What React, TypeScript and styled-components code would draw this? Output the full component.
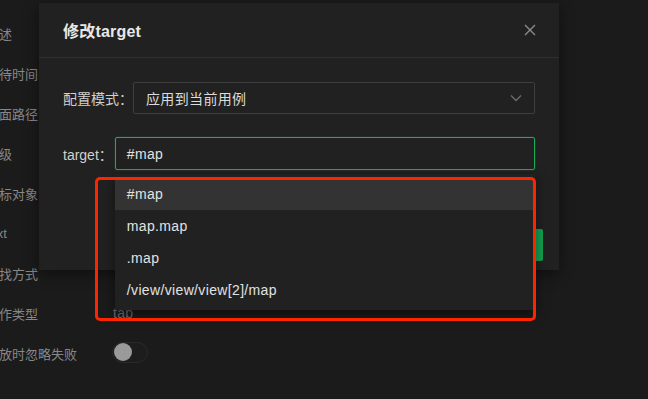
import React from "react";
import styled, { createGlobalStyle } from "styled-components";

const GlobalStyle = createGlobalStyle`
  html, body {
    margin: 0;
    padding: 0;
    background: #1b1b1b;
  }
  body {
    font-family: "Liberation Sans", "Noto Sans CJK SC", sans-serif;
    font-size: 14px;
    -webkit-font-smoothing: antialiased;
  }
`;

const Page = styled.div`
  position: relative;
  width: 648px;
  height: 399px;
  overflow: hidden;
  background: #1b1b1b;
`;

const BgForm = styled.div`
  display: flex;
  flex-direction: column;
  padding-top: 13px;
  margin-left: -14px;
`;

const BgRow = styled.div`
  display: grid;
  grid-template-columns: 127px 1fr;
  align-items: center;
  height: 40px;
`;

const BgLabel = styled.span`
  color: #878787;
  font-size: 13px;
  white-space: nowrap;
`;

const BgValue = styled.span`
  color: #6e6e6e;
  font-size: 14px;
  letter-spacing: 0.3px;
`;

const Toggle = styled.span`
  display: inline-flex;
  align-items: center;
  box-sizing: border-box;
  width: 36px;
  height: 21px;
  padding: 1px;
  border-radius: 11px;
  background: #1d1d1d;
  border: 1px solid #2a2a2a;
  margin-left: -1px;

  &::before {
    content: "";
    width: 18px;
    height: 18px;
    border-radius: 50%;
    background: #9a9a9a;
  }
`;

const Modal = styled.div`
  position: absolute;
  left: 39px;
  top: 3px;
  width: 520px;
  background: #212121;
  box-shadow: 0 4px 14px rgba(0, 0, 0, 0.45);
  display: flex;
  flex-direction: column;
`;

const Header = styled.div`
  display: flex;
  align-items: center;
  justify-content: space-between;
  height: 54px;
  padding: 0 22px 0 24px;
  border-bottom: 1px solid #2f2f2f;
`;

const Title = styled.div`
  color: #e8e8e8;
  font-size: 16px;
  font-weight: 600;
  letter-spacing: 0.2px;
`;

const CloseBtn = styled.span`
  display: flex;
  width: 14px;
  height: 14px;
`;

const Body = styled.div`
  display: flex;
  flex-direction: column;
  gap: 23px;
  padding: 24px 24px 48px;
  letter-spacing: 0.35px;
`;

const FormRow = styled.div`
  display: flex;
  align-items: center;
`;

const Label = styled.span<{ $pad?: number }>`
  color: #d0d0d0;
  font-size: 14px;
  white-space: nowrap;
  letter-spacing: 0;
  padding-right: ${(p) => p.$pad ?? 0}px;
`;

const Select = styled.div`
  flex: 1;
  display: flex;
  align-items: center;
  justify-content: space-between;
  box-sizing: border-box;
  height: 32px;
  padding: 0 12px;
  border: 1px solid #3e3e3e;
  border-radius: 2px;
  color: #dcdcdc;
`;

const FieldWrap = styled.div`
  position: relative;
  flex: 1;
`;

const Input = styled.div<{ $focused?: boolean }>`
  display: flex;
  align-items: center;
  box-sizing: border-box;
  height: 33px;
  padding: 0 11px;
  border: 1.5px solid ${(p) => (p.$focused ? "#1ead57" : "#3e3e3e")};
  border-radius: 2px;
  box-shadow: ${(p) => (p.$focused ? "0 0 2px rgba(30, 173, 87, 0.4)" : "none")};
  color: #e2e2e2;
`;

const Dropdown = styled.div`
  position: absolute;
  left: 0;
  right: 0;
  top: 37px;
  z-index: 3;
  padding: 4px 0;
  background: #212121;
  box-shadow: 0 4px 12px rgba(0, 0, 0, 0.5);
`;

const Option = styled.div<{ $active?: boolean }>`
  display: flex;
  align-items: center;
  height: 32px;
  padding: 0 12px;
  color: #e2e2e2;
  background: ${(p) => (p.$active ? "#333333" : "transparent")};
`;

const Annotation = styled.div`
  position: absolute;
  left: 95px;
  top: 177px;
  width: 441px;
  height: 144px;
  box-sizing: border-box;
  border: 3px solid #ff2400;
  border-radius: 5px;
  z-index: 5;
  pointer-events: none;
`;

const Footer = styled.div`
  display: flex;
  justify-content: flex-end;
  gap: 8px;
  padding: 11px 16px 9px;
`;

const Button = styled.button<{ $primary?: boolean }>`
  height: 32px;
  padding: 0 16px;
  border: none;
  border-radius: 2px;
  font: inherit;
  color: #fff;
  background: ${(p) => (p.$primary ? "#12a150" : "#333")};
`;

const bgRows = ["描述", "等待时间", "页面路径", "层级", "目标对象", "text", "查找方式", "操作类型", "回放时忽略失败"];

const options = ["#map", "map.map", ".map", "/view/view/view[2]/map"];

export default function App() {
  return (
    <Page>
      <GlobalStyle />
      <BgForm>
        {bgRows.map((label) => (
          <BgRow key={label}>
            <BgLabel>{label}</BgLabel>
            {label === "操作类型" && <BgValue>tap</BgValue>}
            {label === "回放时忽略失败" && (
              <div>
                <Toggle />
              </div>
            )}
          </BgRow>
        ))}
      </BgForm>

      <Modal>
        <Header>
          <Title>修改target</Title>
          <CloseBtn>
            <svg width="14" height="14" viewBox="0 0 14 14">
              <path d="M2 2L12 12M12 2L2 12" stroke="#8c8c8c" strokeWidth="1.4" />
            </svg>
          </CloseBtn>
        </Header>
        <Body>
          <FormRow>
            <Label>配置模式：</Label>
            <Select>
              <span>应用到当前用例</span>
              <svg width="12" height="8" viewBox="0 0 12 8">
                <path d="M1 1.5L6 6.5L11 1.5" stroke="#6e6e6e" strokeWidth="1.3" fill="none" />
              </svg>
            </Select>
          </FormRow>
          <FormRow>
            <Label $pad={2}>target：</Label>
            <FieldWrap>
              <Input $focused>#map</Input>
              <Dropdown>
                {options.map((o, i) => (
                  <Option key={o} $active={i === 0}>
                    {o}
                  </Option>
                ))}
              </Dropdown>
            </FieldWrap>
          </FormRow>
        </Body>
        <Footer>
          <Button>取消</Button>
          <Button $primary>确定</Button>
        </Footer>
      </Modal>

      <Annotation />
    </Page>
  );
}
